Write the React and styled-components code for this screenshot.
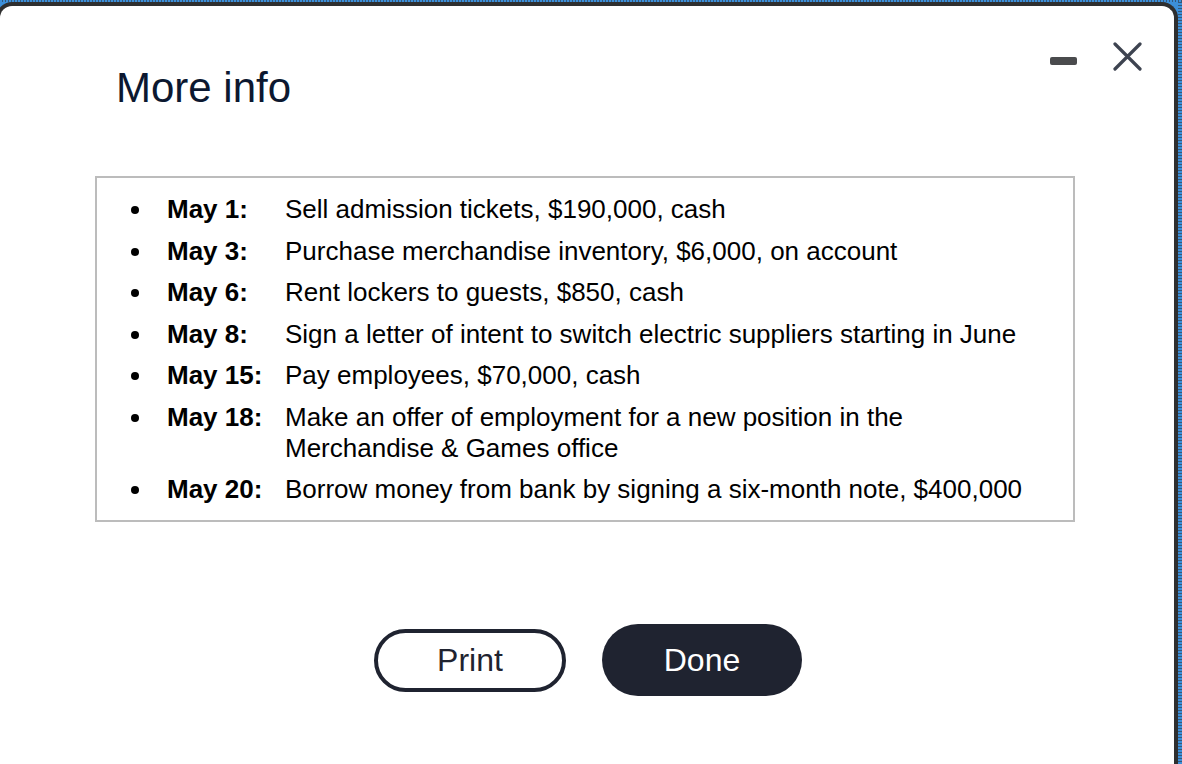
import React from "react";
import styled, { createGlobalStyle } from "styled-components";

const Global = createGlobalStyle`
  html, body {
    margin: 0;
    padding: 0;
    width: 1182px;
    height: 764px;
    overflow: hidden;
    background-color: #3c8fd9;
    background-image: repeating-linear-gradient(90deg, #3c8fd9 0 2px, #35587a 2px 3px),
      repeating-linear-gradient(0deg, #3c8fd9 0 2px, #35587a 2px 3px);
    background-size: 100% 2px, 4px 100%;
    background-repeat: repeat-x, repeat-y;
    background-position: 0 0, right 0;
    font-family: "Liberation Sans", Arial, sans-serif;
  }
  #root { height: 764px; }
`;

const Page = styled.div`
  height: 764px;
  padding-top: 2px;
  box-sizing: border-box;
`;

const Dialog = styled.div`
  box-sizing: border-box;
  height: 762px;
  margin: 0 4px 0 -4px;
  background: #ffffff;
  border: 4px solid #2f2f2f;
  border-bottom: none;
  border-radius: 16px 16px 0 0;
  display: flex;
  flex-direction: column;
`;

const Header = styled.div`
  display: flex;
  justify-content: space-between;
  align-items: flex-start;
  padding: 0 32px 0 116px;
`;

const Title = styled.h2`
  margin: 61px 0 0;
  font-size: 42px;
  line-height: 42px;
  font-weight: 400;
  color: #0c1830;
`;

const Controls = styled.div`
  margin-top: 36px;
  display: flex;
  align-items: flex-start;
  gap: 36px;
`;

const MinButton = styled.span`
  display: block;
  margin-top: 15px;
  width: 27px;
  height: 8px;
  border-radius: 2px;
  background: #4a4b4d;
`;

const CloseIcon = styled.svg`
  display: block;
  width: 29px;
  height: 29px;
`;

const Body = styled.div`
  padding-left: 95px;
  margin-top: 67px;
`;

const InfoBox = styled.ul`
  box-sizing: border-box;
  width: 980px;
  margin: 0;
  list-style: none;
  border: 2px solid #bcbcbc;
  padding: 16px 0 15px 27px;
  display: flex;
  flex-direction: column;
  gap: 10.5px;
`;

const Item = styled.li`
  display: grid;
  grid-template-columns: 43px 118px auto;
  font-size: 26px;
  line-height: 31px;
  color: #000;
`;

const Bullet = styled.span`
  display: block;
  width: 8px;
  height: 8px;
  margin: 12px 0 0 7px;
  border-radius: 50%;
  background: #000;
`;

const DateLabel = styled.span`
  font-weight: 700;
`;

const Desc = styled.span`
  max-width: 745px;
`;

const Actions = styled.div`
  margin-top: 102px;
  display: flex;
  justify-content: center;
  align-items: center;
  gap: 36px;
  padding-left: 2px;
`;

const Button = styled.button`
  box-sizing: border-box;
  font-family: "Liberation Sans", Arial, sans-serif;
  font-size: 32px;
  border-radius: 999px;
  cursor: pointer;
  width: ${(p) => (p.$primary ? "200px" : "192px")};
  height: ${(p) => (p.$primary ? "72px" : "63px")};
  background: ${(p) => (p.$primary ? "#1f2330" : "#ffffff")};
  color: ${(p) => (p.$primary ? "#ffffff" : "#1f2330")};
  border: ${(p) => (p.$primary ? "none" : "4px solid #1f2330")};
  padding: 0;
`;

const items = [
  ["May 1:", "Sell admission tickets, $190,000, cash"],
  ["May 3:", "Purchase merchandise inventory, $6,000, on account"],
  ["May 6:", "Rent lockers to guests, $850, cash"],
  ["May 8:", "Sign a letter of intent to switch electric suppliers starting in June"],
  ["May 15:", "Pay employees, $70,000, cash"],
  ["May 18:", "Make an offer of employment for a new position in the Merchandise & Games office"],
  ["May 20:", "Borrow money from bank by signing a six-month note, $400,000"],
];

export default function App() {
  return (
    <>
      <Global />
      <Page>
        <Dialog>
          <Header>
            <Title>More info</Title>
            <Controls>
              <MinButton />
              <CloseIcon viewBox="0 0 29 29">
                <path
                  d="M2 2 L27 27 M27 2 L2 27"
                  stroke="#3d4350"
                  strokeWidth="3.2"
                  strokeLinecap="round"
                  fill="none"
                />
              </CloseIcon>
            </Controls>
          </Header>
          <Body>
            <InfoBox>
              {items.map(([d, t]) => (
                <Item key={d}>
                  <Bullet />
                  <DateLabel>{d}</DateLabel>
                  <Desc>{t}</Desc>
                </Item>
              ))}
            </InfoBox>
          </Body>
          <Actions>
            <Button>Print</Button>
            <Button $primary>Done</Button>
          </Actions>
        </Dialog>
      </Page>
    </>
  );
}
